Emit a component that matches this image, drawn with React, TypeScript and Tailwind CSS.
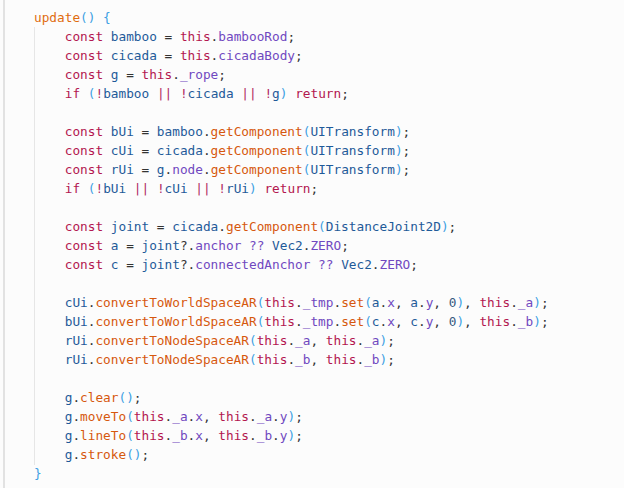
type Tok = [string, string];

// token colours
const K = "text-[#b3174f]"; // keywords, this
const V = "text-[#1f5a99]"; // variables
const P = "text-[#7048c0]"; // properties
const F = "text-[#d6580e]"; // function calls
const B = "text-[#3c9fe3]"; // brackets
const O = "text-[#333333]"; // punctuation
const L = "text-[#b02a62]"; // logical ops
const N = "text-[#35597f]"; // numbers

const t = (s: string, c: string): Tok => [s, c];

const LINES: { indent: number; toks: Tok[] }[] = [
  { indent: 0, toks: [t("update", "text-[#e06c10]"), t("()", B), t(" ", O), t("{", B)] },
  { indent: 1, toks: [t("const", K), t(" bamboo", V), t(" = ", O), t("this", K), t(".", O), t("bambooRod", P), t(";", O)] },
  { indent: 1, toks: [t("const", K), t(" cicada", V), t(" = ", O), t("this", K), t(".", O), t("cicadaBody", P), t(";", O)] },
  { indent: 1, toks: [t("const", K), t(" g", V), t(" = ", O), t("this", K), t(".", O), t("_rope", P), t(";", O)] },
  { indent: 1, toks: [t("if", K), t(" ", O), t("(", B), t("!", L), t("bamboo", V), t(" || ", L), t("!", L), t("cicada", V), t(" || ", L), t("!", L), t("g", V), t(")", B), t(" ", O), t("return", K), t(";", O)] },
  { indent: 0, toks: [] },
  { indent: 1, toks: [t("const", K), t(" bUi", V), t(" = ", O), t("bamboo", V), t(".", O), t("getComponent", F), t("(", B), t("UITransform", V), t(")", B), t(";", O)] },
  { indent: 1, toks: [t("const", K), t(" cUi", V), t(" = ", O), t("cicada", V), t(".", O), t("getComponent", F), t("(", B), t("UITransform", V), t(")", B), t(";", O)] },
  { indent: 1, toks: [t("const", K), t(" rUi", V), t(" = ", O), t("g", V), t(".", O), t("node", P), t(".", O), t("getComponent", F), t("(", B), t("UITransform", V), t(")", B), t(";", O)] },
  { indent: 1, toks: [t("if", K), t(" ", O), t("(", B), t("!", L), t("bUi", V), t(" || ", L), t("!", L), t("cUi", V), t(" || ", L), t("!", L), t("rUi", V), t(")", B), t(" ", O), t("return", K), t(";", O)] },
  { indent: 0, toks: [] },
  { indent: 1, toks: [t("const", K), t(" joint", V), t(" = ", O), t("cicada", V), t(".", O), t("getComponent", F), t("(", B), t("DistanceJoint2D", V), t(")", B), t(";", O)] },
  { indent: 1, toks: [t("const", K), t(" a", V), t(" = ", O), t("joint", V), t("?.", O), t("anchor", P), t(" ?? ", P), t("Vec2", V), t(".", O), t("ZERO", P), t(";", O)] },
  { indent: 1, toks: [t("const", K), t(" c", V), t(" = ", O), t("joint", V), t("?.", O), t("connectedAnchor", P), t(" ?? ", P), t("Vec2", V), t(".", O), t("ZERO", P), t(";", O)] },
  { indent: 0, toks: [] },
  { indent: 1, toks: [t("cUi", V), t(".", O), t("convertToWorldSpaceAR", F), t("(", B), t("this", K), t(".", O), t("_tmp", P), t(".", O), t("set", F), t("(", B), t("a", V), t(".", O), t("x", P), t(", ", O), t("a", V), t(".", O), t("y", P), t(", ", O), t("0", N), t(")", B), t(", ", O), t("this", K), t(".", O), t("_a", P), t(")", B), t(";", O)] },
  { indent: 1, toks: [t("bUi", V), t(".", O), t("convertToWorldSpaceAR", F), t("(", B), t("this", K), t(".", O), t("_tmp", P), t(".", O), t("set", F), t("(", B), t("c", V), t(".", O), t("x", P), t(", ", O), t("c", V), t(".", O), t("y", P), t(", ", O), t("0", N), t(")", B), t(", ", O), t("this", K), t(".", O), t("_b", P), t(")", B), t(";", O)] },
  { indent: 1, toks: [t("rUi", V), t(".", O), t("convertToNodeSpaceAR", F), t("(", B), t("this", K), t(".", O), t("_a", P), t(", ", O), t("this", K), t(".", O), t("_a", P), t(")", B), t(";", O)] },
  { indent: 1, toks: [t("rUi", V), t(".", O), t("convertToNodeSpaceAR", F), t("(", B), t("this", K), t(".", O), t("_b", P), t(", ", O), t("this", K), t(".", O), t("_b", P), t(")", B), t(";", O)] },
  { indent: 0, toks: [] },
  { indent: 1, toks: [t("g", V), t(".", O), t("clear", F), t("()", B), t(";", O)] },
  { indent: 1, toks: [t("g", V), t(".", O), t("moveTo", F), t("(", B), t("this", K), t(".", O), t("_a", P), t(".", O), t("x", P), t(", ", O), t("this", K), t(".", O), t("_a", P), t(".", O), t("y", P), t(")", B), t(";", O)] },
  { indent: 1, toks: [t("g", V), t(".", O), t("lineTo", F), t("(", B), t("this", K), t(".", O), t("_b", P), t(".", O), t("x", P), t(", ", O), t("this", K), t(".", O), t("_b", P), t(".", O), t("y", P), t(")", B), t(";", O)] },
  { indent: 1, toks: [t("g", V), t(".", O), t("stroke", F), t("()", B), t(";", O)] },
  { indent: 0, toks: [t("}", B)] },
];

export default function App() {
  return (
    <div className="flex h-[488px] w-[624px] bg-[#fcfcfc]">
      <div className="ml-[3px] w-[2px] bg-[#e2e2e2]" />
      <div className="relative flex-1 pl-[29px] pt-[8px] font-['DejaVu_Sans_Mono',monospace] text-[12.75px] leading-[19px] whitespace-pre">
        <div className="absolute left-[29px] top-[27px] h-[438px] w-px bg-[#e6e6e6]" />
        {LINES.map((line, i) => (
          <div key={i} className="h-[19px]">
            {line.indent ? "    " : ""}
            {line.toks.map(([s, c], j) => (
              <span key={j} className={c}>
                {s}
              </span>
            ))}
          </div>
        ))}
      </div>
    </div>
  );
}
